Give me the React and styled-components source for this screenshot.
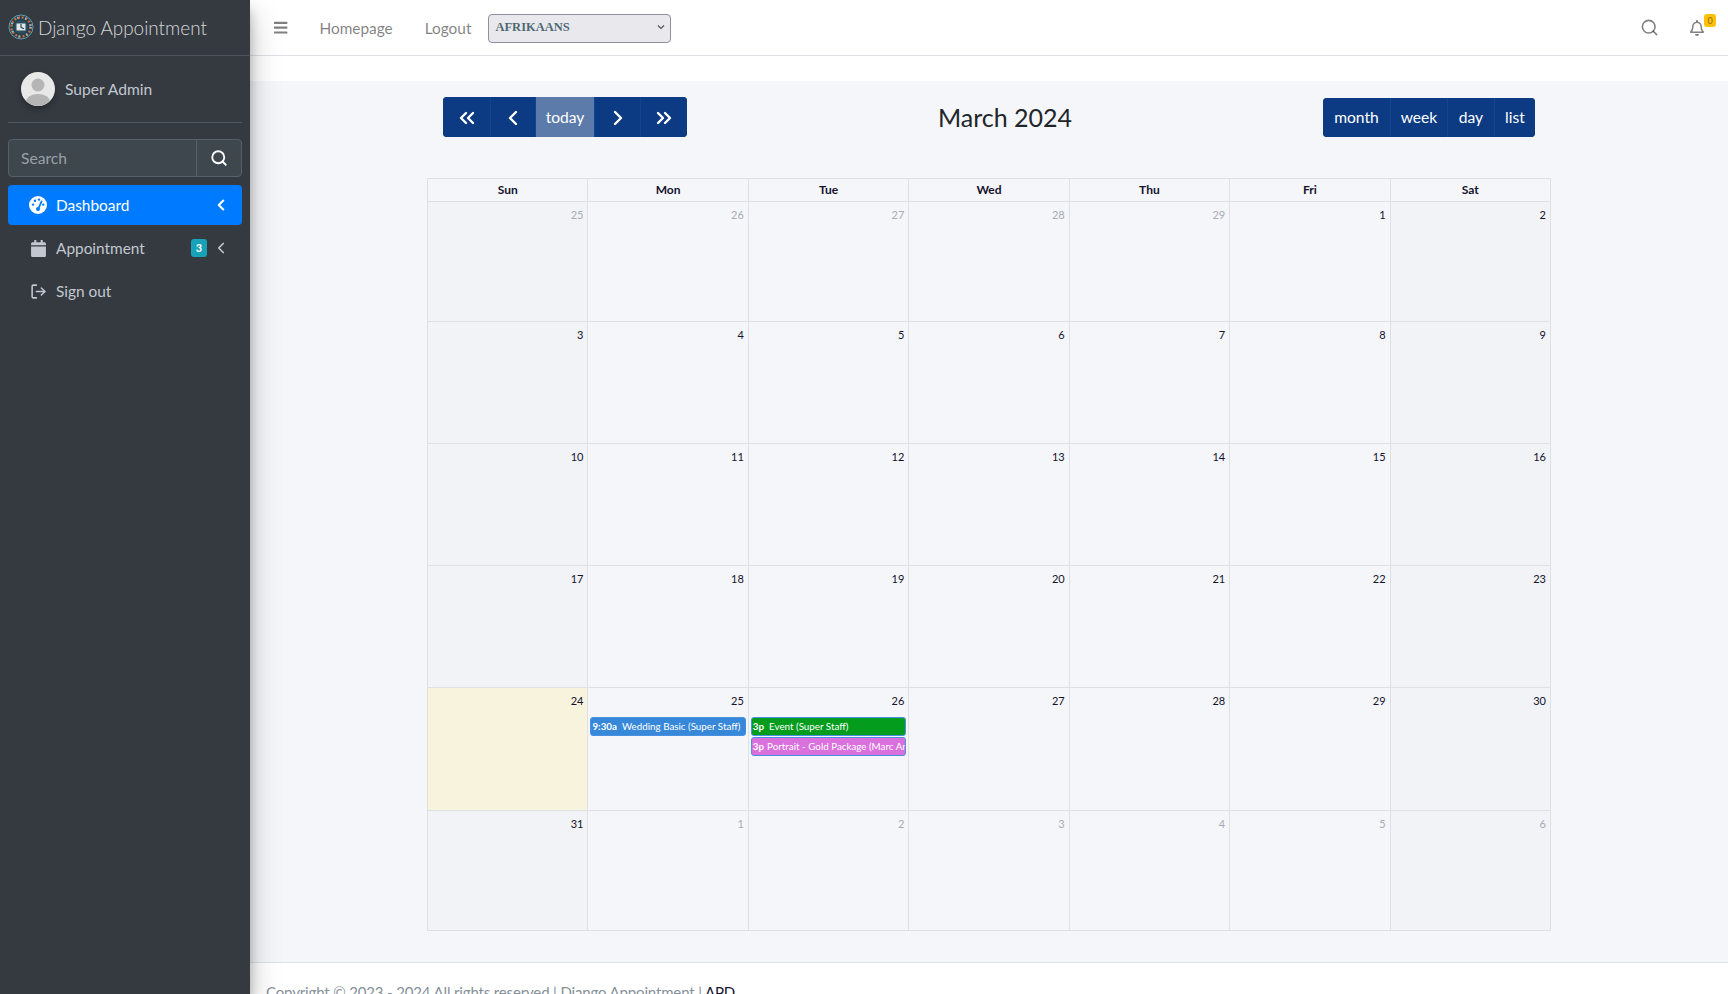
import React from 'react';
import styled, { createGlobalStyle } from 'styled-components';
import { FaBars, FaRegBell, FaCalendar } from 'react-icons/fa';
import { LogOut, Search, ChevronLeft, ChevronRight, ChevronsLeft, ChevronsRight } from 'lucide-react';

const Global = createGlobalStyle`
  html, body { margin: 0; padding: 0; height: 994px; overflow: hidden; background: #fff; }
  body { font-family: Lato, "Noto Sans", sans-serif; color: #212529; }
  * { box-sizing: border-box; }
`;

const Page = styled.div`display: flex; width: 1728px; height: 994px; overflow: hidden;`;

const Sidebar = styled.aside`
  width: 250px; flex: none; background: #343a40; position: relative; z-index: 2;
  box-shadow: 0 14px 28px rgba(0,0,0,.25), 0 10px 10px rgba(0,0,0,.22);
`;
const Brand = styled.div`
  height: 56px; display: flex; align-items: center; gap: 4px; padding: 0 0 1px 8px;
  border-bottom: 1px solid #4b545c; color: rgba(255,255,255,.8); font-size: 18.9px; font-weight: 300;
`;
const UserPanel = styled.div`
  margin: 16px 8px 0; padding: 0 0 0 13px; height: 51px; display: flex; align-items: flex-start; gap: 10px;
  border-bottom: 1px solid #4f5962; color: #c2c7d0; font-size: 15.6px;
`;
const Avatar = styled.svg`width: 34px; height: 34px; border-radius: 50%; box-shadow: 0 3px 6px rgba(0,0,0,.3);`;
const UserName = styled.span`line-height: 34px;`;
const SearchBox = styled.div`
  margin: 16px 8px 8px; height: 38px; display: flex; background: #3f474e;
  border: 1px solid #56606a; border-radius: 4px; color: #fff;
`;
const SearchText = styled.div`flex: 1; padding-left: 12px; line-height: 36px; font-size: 15.6px; color: #9aa0a6; border-right: 1px solid #56606a;`;
const SearchBtn = styled.div`width: 44px; display: flex; align-items: center; justify-content: center;`;
const Nav = styled.nav`margin: 0 8px; display: flex; flex-direction: column; gap: 3px;`;
const NavItem = styled.div`
  height: 40px; display: flex; align-items: center; padding: 0 12px 0 21px; border-radius: 4px; font-size: 15.4px;
  background: ${p => (p.$active ? '#007bff' : 'transparent')};
  color: ${p => (p.$active ? '#fff' : '#c2c7d0')};
`;
const NavIcon = styled.span`width: 18px; display: flex; justify-content: center; font-size: 17px; margin-right: 9px;`;
const NavLabel = styled.span`flex: 1;`;
const Badge = styled.span`
  width: 16px; height: 18px; border-radius: 3px; background: #17a2b8; color: #fff; font-size: 11px; font-weight: 700;
  text-align: center; line-height: 18px; margin-right: 5px;
`;

const Main = styled.div`flex: 1; min-width: 0; display: flex; flex-direction: column; background: #fff;`;
const Navbar = styled.header`
  height: 56px; flex: none; display: flex; align-items: center; border-bottom: 1px solid #dee2e6;
  padding: 0 20px 0 23px; color: rgba(0,0,0,.5); font-size: 15.4px;
`;
const NavLink = styled.span`margin-left: ${p => p.$gap}px; line-height: 24px;`;
const LangSelect = styled.div`
  margin: 1px 0 0 17px; width: 183px; height: 29px; background: #e9e9ed; border: 1px solid #8f8f9d; border-radius: 4px;
  font: 700 12.5px "Liberation Serif", serif; color: #4f6a75; display: flex; align-items: center; justify-content: space-between;
  padding: 0 4px 2px 6px;
`;
const Spacer = styled.div`flex: 1;`;
const BellWrap = styled.span`position: relative; display: flex; margin-left: 30px; margin-right: 3px; font-size: 16px;`;
const BellBadge = styled.span`
  position: absolute; top: -6px; right: -11px; width: 12px; height: 13px; border-radius: 3px; background: #ffc107;
  font-size: 9px; line-height: 13px; text-align: center; color: #8a6d10;
`;
const Strip = styled.div`height: 25px; flex: none; background: #fff;`;
const Content = styled.main`flex: 1; min-height: 0; background: #f4f6f9; padding: 16px 177px 0 177px;`;
const Toolbar = styled.div`display: flex; align-items: center; justify-content: space-between; padding: 0 16px; height: 40px;`;
const BtnGroup = styled.div`display: flex; height: ${p => p.$h}px; border-radius: 4px; overflow: hidden; background: #0c3b84;`;
const CalBtn = styled.div`
  display: flex; align-items: center; justify-content: center; width: ${p => p.$w}px; color: #fff; font-size: 15.6px;
  padding-top: ${p => (p.$icon ? 2 : 0)}px;
  border-left: ${p => (p.$first ? 'none' : '1px solid #0f4592')};
  background: ${p => (p.$faded ? '#5c7bab' : '#0c3b84')};
`;
const Title = styled.h2`margin: 0; font-size: 25px; font-weight: 400; color: #212529;`;
const Grid = styled.div`
  margin-top: 41px; display: grid; grid-template-columns: repeat(7, 1fr); grid-template-rows: 23px 120px 122px 122px 122px 123px 120px;
  border-top: 1px solid #dee0e4; border-left: 1px solid #dee0e4;
`;
const HeadCell = styled.div`
  border-right: 1px solid #dee0e4; border-bottom: 1px solid #dee0e4; text-align: center; font-size: 12px; font-weight: 700;
  line-height: 22px; color: #14122e;
`;
const DayCell = styled.div`
  border-right: 1px solid #dee0e4; border-bottom: 1px solid #dee0e4; padding: 6px 4px 0 2px; text-align: right; font-size: 11px; line-height: 14px;
  background: ${p => (p.$today ? '#f8f3dc' : p.$weekend ? '#f1f3f6' : 'transparent')};
  color: ${p => (p.$other ? '#a9abb5' : '#14122e')};
  min-width: 0;
`;
const Events = styled.div`margin: 9px -2px 0 0; display: flex; flex-direction: column; gap: 1px; text-align: left;`;
const Event = styled.div`
  height: 19px; border-radius: 3px; border: 1px solid #4a90e2; background: ${p => p.$color}; color: #fff; font-size: 9.8px; line-height: 17px;
  white-space: nowrap; overflow: hidden; padding-left: 1px;
`;
const EvTime = styled.b`margin-right: ${p => p.$gap}px;`;
const Footer = styled.footer`
  height: 32px; flex: none; background: #fff; border-top: 1px solid #dee2e6; padding: 17px 16px 0; font-size: 15px; letter-spacing: -0.15px; color: #869099; line-height: 24px; white-space: nowrap;
`;
const FootLink = styled.span`color: #14122e;`;

const Logo = () => (
  <svg width="26" height="26" viewBox="0 0 26 26">
    <circle cx="13" cy="13" r="12.5" fill="#21404f" />
    <circle cx="13" cy="13" r="12" fill="none" stroke="#7fb0c0" strokeWidth=".8" />
    <circle cx="13" cy="13" r="9.6" fill="none" stroke="#c9683a" strokeWidth="2.4" strokeDasharray="2 1.8" />
    <circle cx="13" cy="13" r="9.6" fill="none" stroke="#8ec3d8" strokeWidth="2.4" strokeDasharray="1.2 7" />
    <circle cx="13" cy="13" r="7" fill="#2b4d5c" />
    <path d="M8.5 9.5h9v7h-9z" fill="#dfe7ea" />
    <path d="M13 10v3.4l3 1.4" fill="none" stroke="#2b4d5c" strokeWidth="1.2" />
  </svg>
);

const DashboardIcon = () => (
  <svg width="18" height="18" viewBox="0 0 18 18">
    <circle cx="9" cy="9" r="9" fill="#fff" />
    <g fill="#007bff">
      <circle cx="4" cy="8.6" r="1.2" />
      <circle cx="6" cy="4.7" r="1.2" />
      <circle cx="10" cy="3.6" r="1.2" />
      <circle cx="14.2" cy="8.6" r="1.2" />
    </g>
    <path d="M9 13.5L12.6 5.4" stroke="#007bff" strokeWidth="1.8" strokeLinecap="round" />
    <circle cx="9" cy="13" r="2" fill="#007bff" />
  </svg>
);

const days = [
  [[25,1],[26,1],[27,1],[28,1],[29,1],[1],[2]],
  [[3],[4],[5],[6],[7],[8],[9]],
  [[10],[11],[12],[13],[14],[15],[16]],
  [[17],[18],[19],[20],[21],[22],[23]],
  [[24],[25],[26],[27],[28],[29],[30]],
  [[31],[1,1],[2,1],[3,1],[4,1],[5,1],[6,1]],
];
const heads = ['Sun','Mon','Tue','Wed','Thu','Fri','Sat'];
const events = {
  '4-1': [{ c: '#3788d8', t: '9:30a', g: 5, n: 'Wedding Basic (Super Staff)' }],
  '4-2': [
    { c: '#039c1d', t: '3p', g: 5, n: 'Event (Super Staff)' },
    { c: '#d970dd', t: '3p', g: 3, n: 'Portrait - Gold Package (Marc Antoine)' },
  ],
};

export default function App() {
  return (
    <Page>
      <Global />
      <Sidebar>
        <Brand><Logo />Django Appointment</Brand>
        <UserPanel>
          <Avatar viewBox="0 0 34 34">
            <rect width="34" height="34" fill="#e8e8e8" />
            <circle cx="17" cy="13" r="6.5" fill="#b5b5b5" />
            <ellipse cx="17" cy="30" rx="12" ry="8" fill="#b5b5b5" />
          </Avatar>
          <UserName>Super Admin</UserName>
        </UserPanel>
        <SearchBox>
          <SearchText>Search</SearchText>
          <SearchBtn><Search size={18} strokeWidth={2.4} /></SearchBtn>
        </SearchBox>
        <Nav>
          <NavItem $active>
            <NavIcon><DashboardIcon /></NavIcon><NavLabel>Dashboard</NavLabel><ChevronLeft size={18} strokeWidth={2.8} />
          </NavItem>
          <NavItem>
            <NavIcon><FaCalendar /></NavIcon><NavLabel>Appointment</NavLabel><Badge>3</Badge><ChevronLeft size={18} strokeWidth={2.2} />
          </NavItem>
          <NavItem>
            <NavIcon><LogOut size={17} strokeWidth={2.2} /></NavIcon><NavLabel>Sign out</NavLabel>
          </NavItem>
        </Nav>
      </Sidebar>
      <Main>
        <Navbar>
          <FaBars />
          <NavLink $gap={31}>Homepage</NavLink>
          <NavLink $gap={32}>Logout</NavLink>
          <LangSelect>AFRIKAANS
            <svg width="10" height="10" viewBox="0 0 10 10"><path d="M2 3.5l3 3 3-3" fill="none" stroke="#555" strokeWidth="1.2" /></svg>
          </LangSelect>
          <Spacer />
          <Search size={19} strokeWidth={2} />
          <BellWrap><FaRegBell /><BellBadge>0</BellBadge></BellWrap>
        </Navbar>
        <Strip />
        <Content>
          <Toolbar>
            <BtnGroup $h={40}>
              <CalBtn $w={47} $first $icon><ChevronsLeft size={24} strokeWidth={2.4} /></CalBtn>
              <CalBtn $w={45} $icon><ChevronLeft size={24} strokeWidth={2.4} /></CalBtn>
              <CalBtn $w={59} $faded>today</CalBtn>
              <CalBtn $w={46} $icon><ChevronRight size={24} strokeWidth={2.4} /></CalBtn>
              <CalBtn $w={47} $icon><ChevronsRight size={24} strokeWidth={2.4} /></CalBtn>
            </BtnGroup>
            <Title>March 2024</Title>
            <BtnGroup $h={39}>
              <CalBtn $w={67} $first>month</CalBtn>
              <CalBtn $w={57}>week</CalBtn>
              <CalBtn $w={47}>day</CalBtn>
              <CalBtn $w={41}>list</CalBtn>
            </BtnGroup>
          </Toolbar>
          <Grid>
            {heads.map(h => <HeadCell key={h}>{h}</HeadCell>)}
            {days.map((row, r) => row.map(([d, other], c) => (
              <DayCell key={`${r}-${c}`} $other={other} $weekend={c === 0 || c === 6} $today={r === 4 && c === 0}>
                {d}
                {events[`${r}-${c}`] && (
                  <Events>
                    {events[`${r}-${c}`].map(e => (
                      <Event key={e.c} $color={e.c}><EvTime $gap={e.g}>{e.t}</EvTime>{e.n}</Event>
                    ))}
                  </Events>
                )}
              </DayCell>
            )))}
          </Grid>
        </Content>
        <Footer>Copyright © 2023 - 2024 All rights reserved | Django Appointment | <FootLink>APD</FootLink></Footer>
      </Main>
    </Page>
  );
}
